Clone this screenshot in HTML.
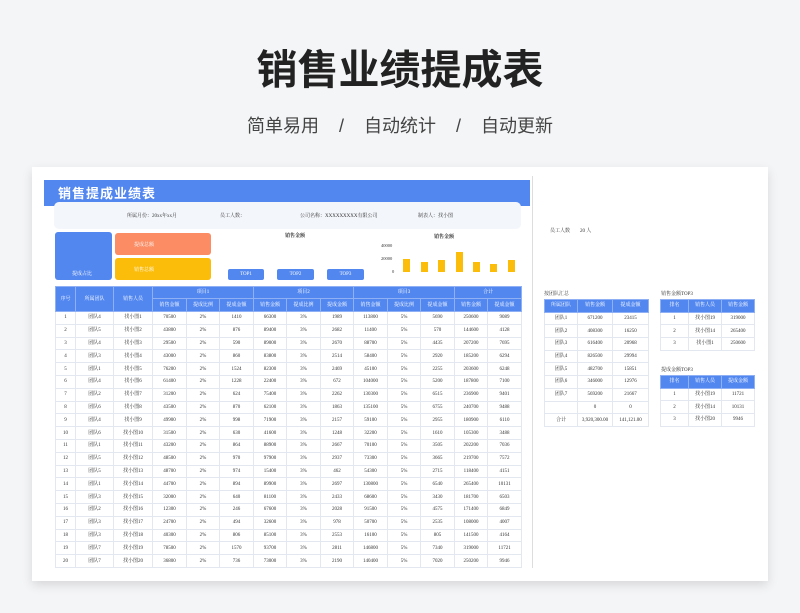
<!DOCTYPE html>
<html><head><meta charset="utf-8"><style>
*{margin:0;padding:0;box-sizing:border-box}
body{width:800px;height:613px;background:#f4f5f7;position:relative;overflow:hidden;font-family:"Liberation Serif","Noto Serif CJK SC",serif;color:#333}
.abs{position:absolute}
h1{position:absolute;left:0;width:800px;top:36px;text-align:center;font:bold 41px "Liberation Sans","Noto Sans CJK SC",sans-serif;color:#222;letter-spacing:0}
.sub{position:absolute;left:0;width:800px;top:112px;text-align:center;font:18px "Liberation Sans","Noto Sans CJK SC",sans-serif;color:#444;word-spacing:0}
.card{position:absolute;left:32px;top:167px;width:736px;height:414px;background:#fff;box-shadow:0 4px 10px rgba(0,0,0,.12)}
table{border-collapse:collapse;position:absolute;table-layout:fixed}
td,th{font-size:5px;text-align:center;border:1px solid #e3e8f0;overflow:hidden;white-space:nowrap;font-weight:normal;padding:0;line-height:5px}
th{background:#5287f0;color:#fff;border-color:#8fb0f5}
.t{font-size:5px;color:#333}
</style></head><body>
<h1>销售业绩提成表</h1>
<div class="sub">简单易用 &nbsp;&nbsp;&nbsp;/&nbsp;&nbsp;&nbsp; 自动统计 &nbsp;&nbsp;&nbsp;/&nbsp;&nbsp;&nbsp; 自动更新</div>
<div class="card"></div>
<div class="abs" style="left:532px;top:176px;width:1px;height:392px;background:#ddd"></div>
<div class="abs" style="left:44px;top:180px;width:486px;height:26px;background:#5287f0"></div>
<div class="abs" style="left:58px;top:183px;font:bold 13px 'Liberation Sans','Noto Sans CJK SC',sans-serif;color:#fff;letter-spacing:1px">销售提成业绩表</div>
<div class="abs" style="left:54px;top:202px;width:467px;height:27px;background:#f3f6fb;border-radius:5px"></div>
<div class="abs t" style="left:127px;top:212px">所属月份：20xx年xx月</div>
<div class="abs t" style="left:220px;top:212px">员工人数：</div>
<div class="abs t" style="left:300px;top:212px">公司名称：XXXXXXXXX有限公司</div>
<div class="abs t" style="left:418px;top:212px">制表人：找小图</div>
<div class="abs" style="left:55px;top:232px;width:57px;height:48px;background:#5287f0;border-radius:3px"></div>
<div class="abs" style="left:72px;top:270px;font-size:5px;color:#fff">提成占比</div>
<div class="abs" style="left:115px;top:233px;width:96px;height:22px;background:#fb8c63;border-radius:3px"></div>
<div class="abs" style="left:134px;top:241px;font-size:5px;color:#fff">提成总额</div>
<div class="abs" style="left:115px;top:258px;width:96px;height:22px;background:#fbbc0a;border-radius:3px"></div>
<div class="abs" style="left:134px;top:266px;font-size:5px;color:#fff">销售总额</div>
<div class="abs" style="left:285px;top:232px;font-size:5px;font-weight:bold">销售金额</div>
<div class="abs" style="left:228px;top:269px;width:36px;height:11px;background:#5287f0;border-radius:2px;color:#fff;font-size:5px;text-align:center;line-height:11px">TOP1</div>
<div class="abs" style="left:277px;top:269px;width:37px;height:11px;background:#5287f0;border-radius:2px;color:#fff;font-size:5px;text-align:center;line-height:11px">TOP2</div>
<div class="abs" style="left:327px;top:269px;width:37px;height:11px;background:#5287f0;border-radius:2px;color:#fff;font-size:5px;text-align:center;line-height:11px">TOP3</div>
<div class="abs" style="left:434px;top:233px;font-size:5px;font-weight:bold">销售金额</div>
<div class="abs" style="left:381px;top:243px;font-size:4.5px">40000</div>
<div class="abs" style="left:381px;top:256px;font-size:4.5px">20000</div>
<div class="abs" style="left:392px;top:269px;font-size:4.5px">0</div>
<div class="abs" style="left:403px;top:259px;width:7px;height:13px;background:#fbbc0a"></div>
<div class="abs" style="left:421px;top:262px;width:7px;height:10px;background:#fbbc0a"></div>
<div class="abs" style="left:438px;top:260px;width:7px;height:12px;background:#fbbc0a"></div>
<div class="abs" style="left:456px;top:252px;width:7px;height:20px;background:#fbbc0a"></div>
<div class="abs" style="left:473px;top:262px;width:7px;height:10px;background:#fbbc0a"></div>
<div class="abs" style="left:490px;top:264px;width:7px;height:8px;background:#fbbc0a"></div>
<div class="abs" style="left:508px;top:260px;width:7px;height:12px;background:#fbbc0a"></div>

<table style="left:55px;top:286px;width:466px">
<colgroup><col style="width:20px"><col style="width:38px"><col style="width:39px"><col style="width:34px"><col style="width:33px"><col style="width:34px"><col style="width:33px"><col style="width:34px"><col style="width:33px"><col style="width:34px"><col style="width:33px"><col style="width:34px"><col style="width:33px"><col style="width:34px"></colgroup>
<tr style="height:12px"><th rowspan="2">序号</th><th rowspan="2">所属团队</th><th rowspan="2">销售人员</th><th colspan="3">项目1</th><th colspan="3">项目2</th><th colspan="3">项目3</th><th colspan="2">合计</th></tr>
<tr style="height:13px"><th>销售金额</th><th>提成比例</th><th>提成金额</th><th>销售金额</th><th>提成比例</th><th>提成金额</th><th>销售金额</th><th>提成比例</th><th>提成金额</th><th>销售金额</th><th>提成金额</th></tr>
<tr style="height:12.8px"><td>1</td><td>团队4</td><td>找小图1</td><td>70500</td><td>2%</td><td>1410</td><td>66300</td><td>3%</td><td>1989</td><td>113800</td><td>5%</td><td>5690</td><td>250600</td><td>9089</td></tr>
<tr style="height:12.8px"><td>2</td><td>团队5</td><td>找小图2</td><td>43800</td><td>2%</td><td>876</td><td>89400</td><td>3%</td><td>2682</td><td>11400</td><td>5%</td><td>570</td><td>144600</td><td>4128</td></tr>
<tr style="height:12.8px"><td>3</td><td>团队4</td><td>找小图3</td><td>29500</td><td>2%</td><td>590</td><td>89000</td><td>3%</td><td>2670</td><td>88700</td><td>5%</td><td>4435</td><td>207200</td><td>7695</td></tr>
<tr style="height:12.8px"><td>4</td><td>团队3</td><td>找小图4</td><td>43000</td><td>2%</td><td>860</td><td>83800</td><td>3%</td><td>2514</td><td>58400</td><td>5%</td><td>2920</td><td>185200</td><td>6294</td></tr>
<tr style="height:12.8px"><td>5</td><td>团队1</td><td>找小图5</td><td>76200</td><td>2%</td><td>1524</td><td>82300</td><td>3%</td><td>2469</td><td>45100</td><td>5%</td><td>2255</td><td>203600</td><td>6248</td></tr>
<tr style="height:12.8px"><td>6</td><td>团队4</td><td>找小图6</td><td>61400</td><td>2%</td><td>1228</td><td>22400</td><td>3%</td><td>672</td><td>104000</td><td>5%</td><td>5200</td><td>187800</td><td>7100</td></tr>
<tr style="height:12.8px"><td>7</td><td>团队2</td><td>找小图7</td><td>31200</td><td>2%</td><td>624</td><td>75400</td><td>3%</td><td>2262</td><td>130300</td><td>5%</td><td>6515</td><td>236900</td><td>9401</td></tr>
<tr style="height:12.8px"><td>8</td><td>团队6</td><td>找小图8</td><td>43500</td><td>2%</td><td>870</td><td>62100</td><td>3%</td><td>1863</td><td>135100</td><td>5%</td><td>6755</td><td>240700</td><td>9488</td></tr>
<tr style="height:12.8px"><td>9</td><td>团队4</td><td>找小图9</td><td>49900</td><td>2%</td><td>998</td><td>71900</td><td>3%</td><td>2157</td><td>59100</td><td>5%</td><td>2955</td><td>180900</td><td>6110</td></tr>
<tr style="height:12.8px"><td>10</td><td>团队6</td><td>找小图10</td><td>31500</td><td>2%</td><td>630</td><td>41600</td><td>3%</td><td>1248</td><td>32200</td><td>5%</td><td>1610</td><td>105300</td><td>3488</td></tr>
<tr style="height:12.8px"><td>11</td><td>团队1</td><td>找小图11</td><td>43200</td><td>2%</td><td>864</td><td>88900</td><td>3%</td><td>2667</td><td>70100</td><td>5%</td><td>3505</td><td>202200</td><td>7036</td></tr>
<tr style="height:12.8px"><td>12</td><td>团队5</td><td>找小图12</td><td>48500</td><td>2%</td><td>970</td><td>97900</td><td>3%</td><td>2937</td><td>73300</td><td>5%</td><td>3665</td><td>219700</td><td>7572</td></tr>
<tr style="height:12.8px"><td>13</td><td>团队5</td><td>找小图13</td><td>48700</td><td>2%</td><td>974</td><td>15400</td><td>3%</td><td>462</td><td>54300</td><td>5%</td><td>2715</td><td>118400</td><td>4151</td></tr>
<tr style="height:12.8px"><td>14</td><td>团队1</td><td>找小图14</td><td>44700</td><td>2%</td><td>894</td><td>89900</td><td>3%</td><td>2697</td><td>130800</td><td>5%</td><td>6540</td><td>265400</td><td>10131</td></tr>
<tr style="height:12.8px"><td>15</td><td>团队3</td><td>找小图15</td><td>32000</td><td>2%</td><td>640</td><td>81100</td><td>3%</td><td>2433</td><td>68600</td><td>5%</td><td>3430</td><td>181700</td><td>6503</td></tr>
<tr style="height:12.8px"><td>16</td><td>团队2</td><td>找小图16</td><td>12300</td><td>2%</td><td>246</td><td>67600</td><td>3%</td><td>2028</td><td>91500</td><td>5%</td><td>4575</td><td>171400</td><td>6849</td></tr>
<tr style="height:12.8px"><td>17</td><td>团队3</td><td>找小图17</td><td>24700</td><td>2%</td><td>494</td><td>32600</td><td>3%</td><td>978</td><td>50700</td><td>5%</td><td>2535</td><td>108000</td><td>4007</td></tr>
<tr style="height:12.8px"><td>18</td><td>团队3</td><td>找小图18</td><td>40300</td><td>2%</td><td>806</td><td>85100</td><td>3%</td><td>2553</td><td>16100</td><td>5%</td><td>805</td><td>141500</td><td>4164</td></tr>
<tr style="height:12.8px"><td>19</td><td>团队7</td><td>找小图19</td><td>78500</td><td>2%</td><td>1570</td><td>93700</td><td>3%</td><td>2811</td><td>146800</td><td>5%</td><td>7340</td><td>319000</td><td>11721</td></tr>
<tr style="height:12.8px"><td>20</td><td>团队7</td><td>找小图20</td><td>36800</td><td>2%</td><td>736</td><td>73000</td><td>3%</td><td>2190</td><td>140400</td><td>5%</td><td>7020</td><td>250200</td><td>9946</td></tr>
</table>

<div class="abs t" style="left:550px;top:227px">员工人数 &nbsp;&nbsp;&nbsp;&nbsp;&nbsp;&nbsp; 20 人</div>
<div class="abs t" style="left:544px;top:290px">按团队汇总</div>
<table style="left:544px;top:299px;width:104px">
<colgroup><col style="width:33px"><col style="width:35px"><col style="width:36px"></colgroup>
<tr style="height:12.7px"><th>所属团队</th><th>销售金额</th><th>提成金额</th></tr>
<tr style="height:12.7px"><td>团队1</td><td>671200</td><td>23415</td></tr>
<tr style="height:12.7px"><td>团队2</td><td>408300</td><td>16250</td></tr>
<tr style="height:12.7px"><td>团队3</td><td>616400</td><td>20968</td></tr>
<tr style="height:12.7px"><td>团队4</td><td>826500</td><td>29994</td></tr>
<tr style="height:12.7px"><td>团队5</td><td>482700</td><td>15851</td></tr>
<tr style="height:12.7px"><td>团队6</td><td>346000</td><td>12976</td></tr>
<tr style="height:12.7px"><td>团队7</td><td>569200</td><td>21667</td></tr>
<tr style="height:12.7px"><td></td><td>0</td><td>0</td></tr>
<tr style="height:12.7px"><td>合计</td><td>3,920,300.00</td><td>141,121.00</td></tr>
</table>
<div class="abs t" style="left:661px;top:290px">销售金额TOP3</div>
<table style="left:660px;top:299px;width:94px">
<colgroup><col style="width:28px"><col style="width:33px"><col style="width:33px"></colgroup>
<tr style="height:12.7px"><th>排名</th><th>销售人员</th><th>销售金额</th></tr>
<tr style="height:12.7px"><td>1</td><td>找小图19</td><td>319000</td></tr>
<tr style="height:12.7px"><td>2</td><td>找小图14</td><td>265400</td></tr>
<tr style="height:12.7px"><td>3</td><td>找小图1</td><td>250600</td></tr>
</table>
<div class="abs t" style="left:661px;top:366px">提成金额TOP3</div>
<table style="left:660px;top:375px;width:94px">
<colgroup><col style="width:28px"><col style="width:33px"><col style="width:33px"></colgroup>
<tr style="height:12.7px"><th>排名</th><th>销售人员</th><th>提成金额</th></tr>
<tr style="height:12.7px"><td>1</td><td>找小图19</td><td>11721</td></tr>
<tr style="height:12.7px"><td>2</td><td>找小图14</td><td>10131</td></tr>
<tr style="height:12.7px"><td>3</td><td>找小图20</td><td>9946</td></tr>
</table>
</body></html>
